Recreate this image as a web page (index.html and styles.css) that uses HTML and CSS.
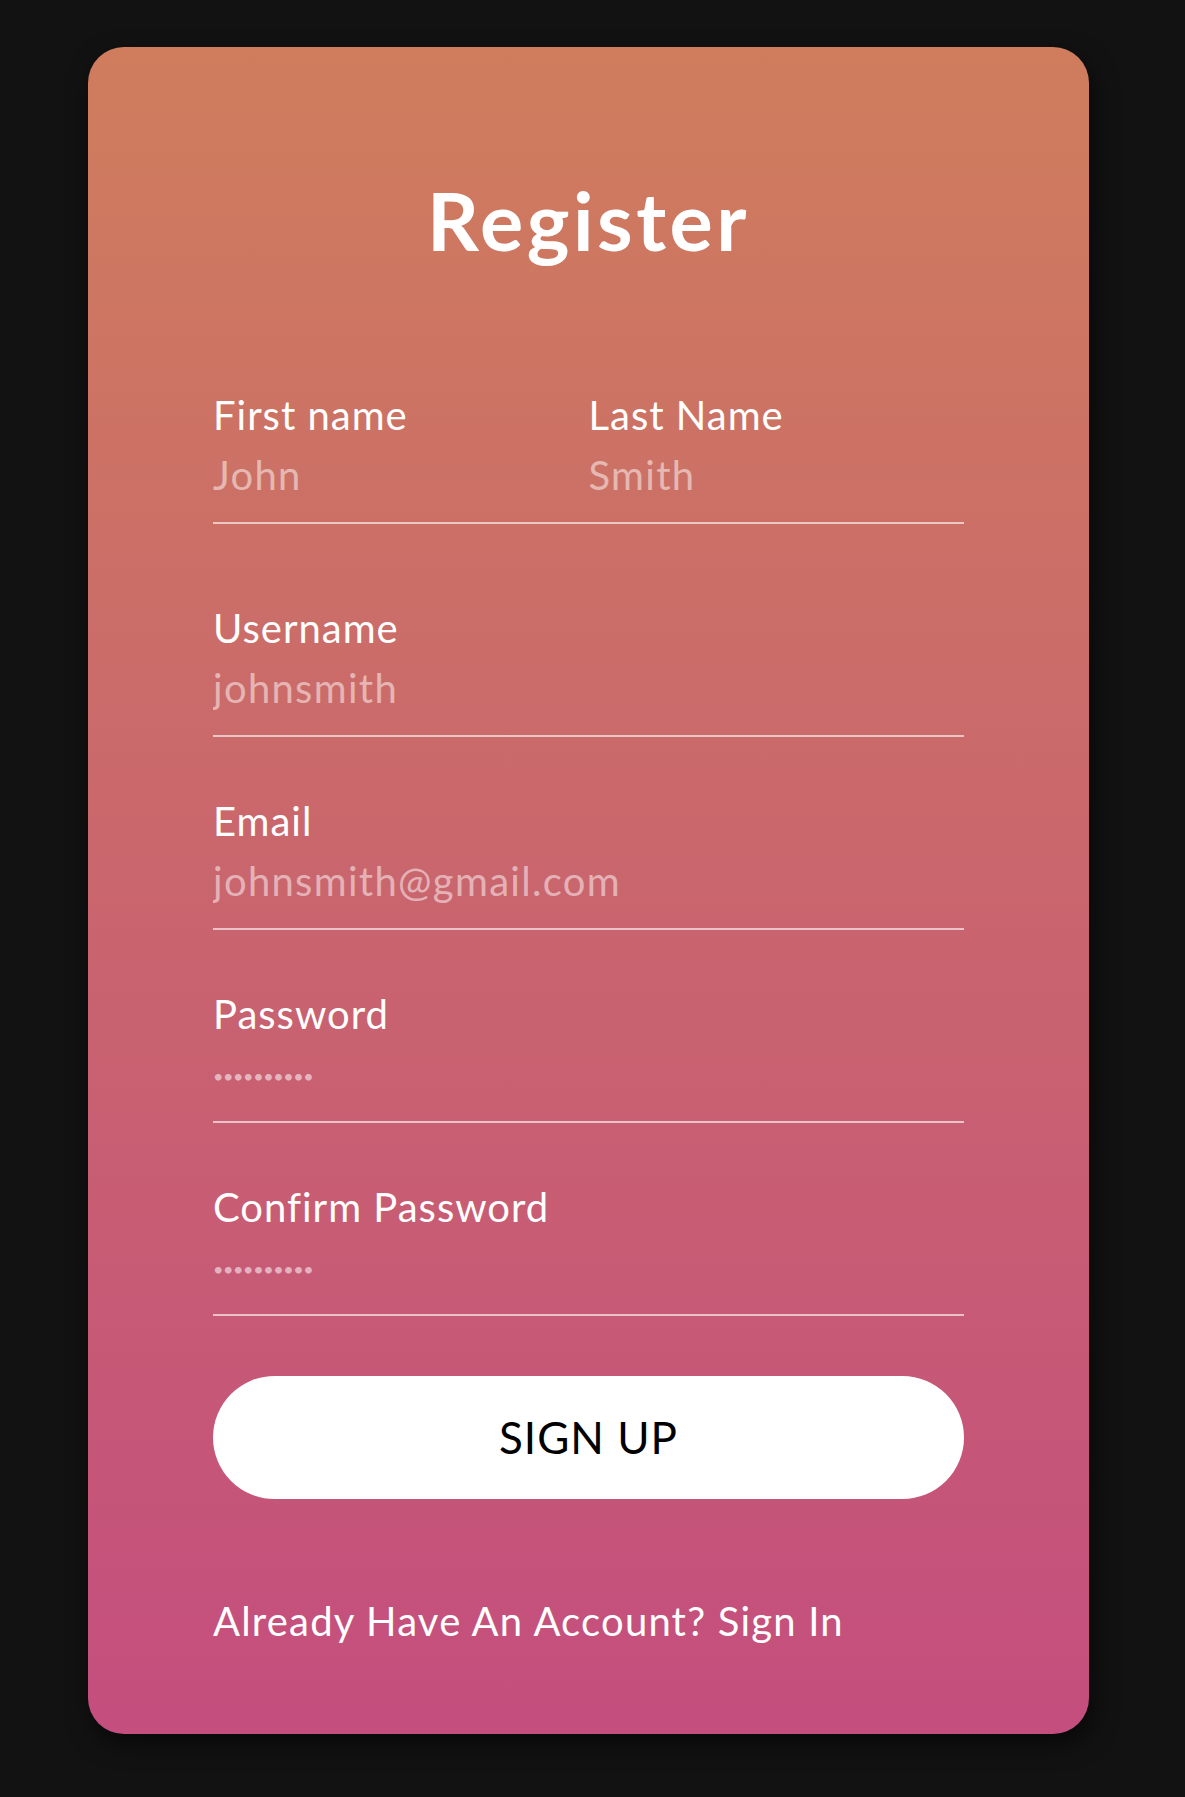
FILE: index.html
```html
<!DOCTYPE html>
<html lang="en">
<head>
<meta charset="utf-8">
<title>Register</title>
<link rel="stylesheet" href="styles.css">
</head>
<body>
<main class="page">
  <form class="card">
    <h1 class="title">Register</h1>
    <div class="fields">
      <div class="name-row">
        <div class="col">
          <label class="label" for="first">First name</label>
          <input class="input" id="first" type="text" placeholder="John">
        </div>
        <div class="col">
          <label class="label" for="last">Last Name</label>
          <input class="input" id="last" type="text" placeholder="Smith">
        </div>
      </div>
      <div class="field">
        <label class="label" for="username">Username</label>
        <input class="input lined" id="username" type="text" placeholder="johnsmith">
      </div>
      <div class="field">
        <label class="label" for="email">Email</label>
        <input class="input lined" id="email" type="email" placeholder="johnsmith@gmail.com">
      </div>
      <div class="field">
        <label class="label" for="password">Password</label>
        <input class="input lined dots" id="password" type="password" placeholder="••••••••••">
      </div>
      <div class="field">
        <label class="label" for="confirm">Confirm Password</label>
        <input class="input lined dots" id="confirm" type="password" placeholder="••••••••••">
      </div>
      <button class="signup" type="button">SIGN UP</button>
    </div>
    <p class="switch">Already Have An Account? <a class="link" href="#">Sign In</a></p>
  </form>
</main>
</body>
</html>
```

FILE: styles.css
```css
* {
  box-sizing: border-box;
}

html, body {
  margin: 0;
  padding: 0;
  background: #121212;
}

body {
  font-family: Lato, "Noto Sans", "Liberation Sans", sans-serif;
  color: #ffffff;
}

.page {
  padding: 47px 96px 63px 88px;
}

.card {
  display: flex;
  flex-direction: column;
  height: 1687px;
  padding: 124px 125px 90px;
  border-radius: 36px;
  background: linear-gradient(180deg, #cf7d5d 0%, #c44e7e 100%);
  box-shadow: 4px 10px 24px rgba(0, 0, 0, 0.55);
}

.title {
  margin: 0 0 123px;
  font-size: 81px;
  line-height: 1.2;
  font-weight: 700;
  text-align: center;
  letter-spacing: 3.5px;
}

.fields {
  display: flex;
  flex-direction: column;
  gap: 60px;
}

.name-row {
  display: grid;
  grid-template-columns: 1fr 1fr;
  padding-bottom: 23px;
  border-bottom: 2px solid rgba(255, 255, 255, 0.62);
  margin-bottom: 20px;
}

.col,
.field {
  display: flex;
  flex-direction: column;
}

.label {
  font-size: 40px;
  line-height: 48px;
  height: 48px;
  color: #ffffff;
  letter-spacing: 1px;
}

.input {
  display: block;
  width: 100%;
  height: 48px;
  margin: 12px 0 0;
  padding: 0;
  border: none;
  background: transparent;
  font-family: inherit;
  font-size: 40px;
  line-height: 48px;
  letter-spacing: 1.3px;
  color: #ffffff;
  outline: none;
}

.input.lined {
  height: 73px;
  padding-bottom: 23px;
  border-bottom: 2px solid rgba(255, 255, 255, 0.62);
}

.input.dots {
  padding-bottom: 35px;
}

.input::placeholder {
  color: rgba(255, 255, 255, 0.5);
  opacity: 1;
}

.input.dots::placeholder {
  font-size: 18px;
  letter-spacing: -0.4px;
  color: rgba(255, 255, 255, 0.55);
}

.signup {
  display: block;
  width: 100%;
  height: 123px;
  border: none;
  border-radius: 62px;
  background: #ffffff;
  color: #000000;
  font-family: inherit;
  font-size: 44px;
  line-height: 1.2;
  letter-spacing: 1px;
  cursor: pointer;
}

.switch {
  margin: 98px 0 0;
  font-size: 40px;
  line-height: 48px;
  letter-spacing: 1.2px;
}

.link {
  color: #ffffff;
  text-decoration: none;
}
```
